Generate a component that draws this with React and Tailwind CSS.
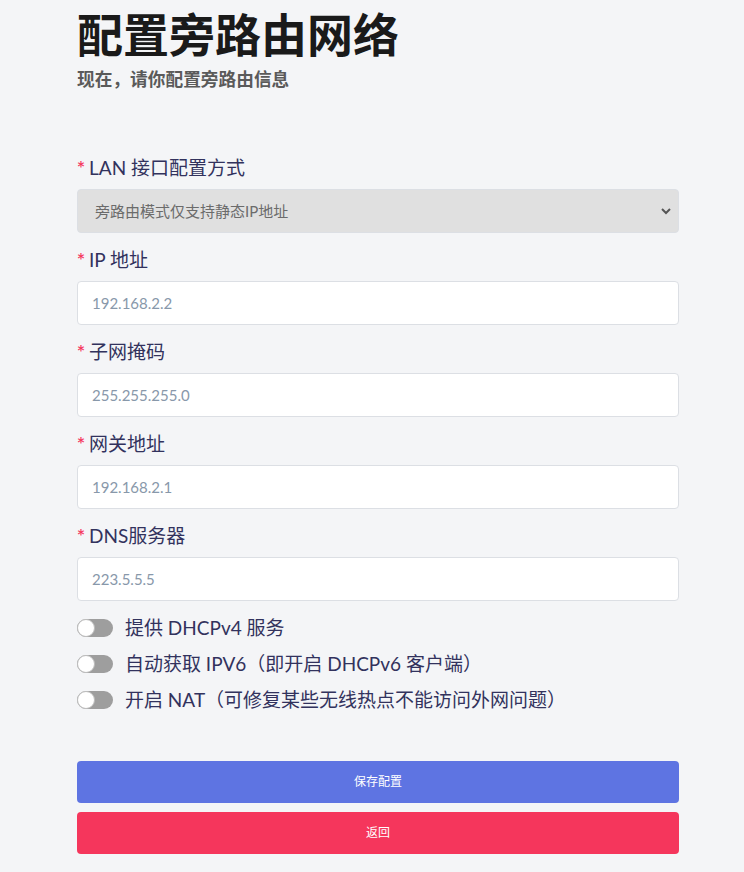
import React, { useState } from 'react';

const font = { fontFamily: '"Lato", "Noto Sans CJK SC", sans-serif' };

const fields = [
  ['ip', 'IP 地址', '192.168.2.2'],
  ['mask', '子网掩码', '255.255.255.0'],
  ['gateway', '网关地址', '192.168.2.1'],
  ['dns', 'DNS服务器', '223.5.5.5'],
];

const toggles = [
  ['dhcp', '提供 DHCPv4 服务'],
  ['ipv6', '自动获取 IPV6（即开启 DHCPv6 客户端）'],
  ['nat', '开启 NAT（可修复某些无线热点不能访问外网问题）'],
];

const Label = ({ children }) => (
  <label className="flex items-center h-[24px] text-[19px] text-[#32325d] mb-[9px]">
    <span
      className="text-[#f5365c] text-[16px] leading-none mr-[4px] -mt-[3px]"
      style={{ fontFamily: '"Inter", sans-serif' }}
    >
      *
    </span>
    {children}
  </label>
);

const Toggle = ({ on, onClick }) => (
  <button
    type="button"
    onClick={onClick}
    className={`relative w-[36px] h-[18px] rounded-full shrink-0 ${on ? 'bg-[#5e72e4]' : 'bg-[#9e9e9e]'}`}
  >
    <span
      className={`absolute top-0 w-[18px] h-[18px] rounded-full bg-white border border-[#bdbdbd] ${on ? 'left-[18px]' : 'left-0'}`}
    />
  </button>
);

export default function App() {
  const [values, setValues] = useState({ ip: '', mask: '', gateway: '', dns: '' });
  const [switches, setSwitches] = useState({ dhcp: false, ipv6: false, nat: false });

  return (
    <div className="min-h-[872px] bg-[#f4f5f7]" style={font}>
      <div className="w-[602px] ml-[77px] pt-[6px] pb-[17px]">
        <h1 className="text-[46px] leading-[58px] font-bold text-[#1a1a1a]">配置旁路由网络</h1>
        <p className="mt-[3px] text-[17.7px] leading-[26px] font-bold text-[#5a5a5a]">现在，请你配置旁路由信息</p>

        <div className="mt-[63px]">
          <Label>LAN 接口配置方式</Label>
          <div className="relative">
            <select
              disabled
              className="w-full h-[44px] appearance-none bg-[#e0e0e0] border border-[#dcdfe4] rounded-[4px] pl-[17px] text-[15px] text-[#6b6b6b]"
              style={font}
            >
              <option>旁路由模式仅支持静态IP地址</option>
            </select>
            <svg className="absolute right-[7px] top-[16px] w-[12px] h-[12px]" viewBox="0 0 12 12">
              <path d="M2 4 L6 8 L10 4" fill="none" stroke="#555" strokeWidth="2" />
            </svg>
          </div>

          {fields.map(([key, label, ph]) => (
            <div key={key} className="mt-[15px]">
              <Label>{label}</Label>
              <input
                value={values[key]}
                onChange={(e) => setValues((p) => ({ ...p, [key]: e.target.value }))}
                placeholder={ph}
                className="w-full h-[44px] bg-white border border-[#dcdfe4] rounded-[4px] px-[14px] text-[15px] text-[#333] placeholder:text-[#8898aa] outline-none"
                style={font}
              />
            </div>
          ))}

          <div className="mt-[15px] flex flex-col gap-[12px]">
            {toggles.map(([key, label]) => (
              <div key={key} className="flex items-center gap-[12px] h-[24px]">
                <Toggle on={switches[key]} onClick={() => setSwitches((p) => ({ ...p, [key]: !p[key] }))} />
                <span className="text-[19px] text-[#32325d]">{label}</span>
              </div>
            ))}
          </div>

          <div className="mt-[49px] flex flex-col gap-[9px]">
            <button className="h-[42px] w-full rounded-[4px] bg-[#5e74e2] text-white text-[12px]">保存配置</button>
            <button className="h-[42px] w-full rounded-[4px] bg-[#f5365c] text-white text-[12px]">返回</button>
          </div>
        </div>
      </div>
    </div>
  );
}
